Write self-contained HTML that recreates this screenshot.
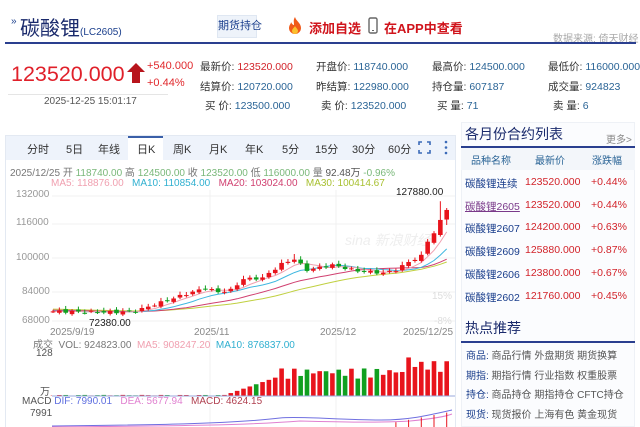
<!DOCTYPE html>
<html><head><meta charset="utf-8">
<style>
*{margin:0;padding:0;box-sizing:border-box}
body{width:640px;height:427px;overflow:hidden;background:#fff;font-family:"Liberation Sans","Noto Sans CJK SC",sans-serif;position:relative;color:#333}
.a{position:absolute;white-space:nowrap}
.lab{font-size:10.5px;color:#333}
.blue{color:#2a6496}
.red{color:#e0282c}
.tab{position:absolute;top:141px;font-size:11px;color:#333}
</style></head><body>
<div class="a" style="left:11px;top:16px;font-size:10px;color:#1a3e8c">»</div>
<div class="a" style="left:20px;top:12px;font-size:20px;color:#1a2a6c">碳酸锂<span style="font-size:10px;color:#1a3e8c">(LC2605)</span></div>
<div class="a" style="left:217px;top:15px;width:40px;height:23px;border:1px solid #dfe7f2;background:#eef3fa;font-size:11px;color:#1a3e8c;text-align:center;line-height:21px">期货持仓</div>
<svg class="a" style="left:287px;top:17px" width="16" height="18" viewBox="0 0 16 18"><path d="M8 0C9 4 14 6 14 11a6 6 0 0 1-12 0c0-3 2-4 2-6 1 2 2 3 3 3C7 5 6 3 8 0z" fill="#f05a1a"/><path d="M8 9c1 2 3 3 3 5a3 3 0 0 1-6 0c0-2 2-3 3-5z" fill="#fbc02d"/></svg>
<div class="a" style="left:309px;top:18px;font-size:13px;color:#d0141c;font-weight:bold">添加自选</div>
<svg class="a" style="left:368px;top:17px" width="10" height="17"><rect x="1" y="1" width="8" height="15" rx="1.5" fill="none" stroke="#666" stroke-width="1.4"/><line x1="4" y1="13.5" x2="6" y2="13.5" stroke="#666"/></svg>
<div class="a" style="left:384px;top:18px;font-size:13px;color:#d0141c;font-weight:bold">在APP中查看</div>
<div class="a" style="left:553px;top:30px;font-size:10px;color:#aaa">数据来源: 倚天财经</div>
<div class="a" style="left:5px;top:42px;width:631px;height:2px;background:#2a3f8f"></div>

<div class="a" style="left:11px;top:62px;font-size:21.5px;color:#e0202a">123520.000</div>
<svg class="a" style="left:127px;top:63px" width="18" height="20"><path d="M9 0L18 9H13V20H5V9H0z" fill="#b8141c"/></svg>
<div class="a red" style="left:147px;top:60px;font-size:11px">+540.000</div>
<div class="a red" style="left:147px;top:77px;font-size:11px">+0.44%</div>
<div class="a" style="left:8px;top:94px;width:160px;height:1px;background:#e5e5e5"></div>
<div class="a" style="left:44px;top:96px;font-size:10px;color:#555">2025-12-25 15:01:17</div>

<div class="a lab" style="left:200px;top:59px">最新价: <span class="red" style="color:#d2232a">123520.000</span></div>
<div class="a lab" style="left:316px;top:59px">开盘价: <span class="blue">118740.000</span></div>
<div class="a lab" style="left:432px;top:59px">最高价: <span class="blue">124500.000</span></div>
<div class="a lab" style="left:548px;top:59px">最低价: <span class="blue">116000.000</span></div>
<div class="a lab" style="left:200px;top:79px">结算价: <span class="blue">120720.000</span></div>
<div class="a lab" style="left:316px;top:79px">昨结算: <span class="blue">122980.000</span></div>
<div class="a lab" style="left:432px;top:79px">持仓量: <span class="blue">607187</span></div>
<div class="a lab" style="left:548px;top:79px">成交量: <span class="blue">924823</span></div>
<div class="a lab" style="left:205px;top:98px">买 价: <span class="blue">123500.000</span></div>
<div class="a lab" style="left:321px;top:98px">卖 价: <span class="blue">123520.000</span></div>
<div class="a lab" style="left:437px;top:98px">买 量: <span class="blue">71</span></div>
<div class="a lab" style="left:553px;top:98px">卖 量: <span class="blue">6</span></div>

<div class="a" style="left:5px;top:135px;width:451px;height:292px;border:1px solid #e3e9f2;border-bottom:none"></div>
<div class="a" style="left:6px;top:136px;width:449px;height:24px;background:#eef3fb"></div>
<div class="a" style="left:128px;top:136px;width:35px;height:24px;background:#fff;border-top:2px solid #3a5fa8"></div>
<div class="tab" style="left:27px">分时</div><div class="tab" style="left:66px">5日</div><div class="tab" style="left:98px">年线</div>
<div class="tab" style="left:137px">日K</div><div class="tab" style="left:173px">周K</div><div class="tab" style="left:209px">月K</div>
<div class="tab" style="left:245px">年K</div><div class="tab" style="left:282px">5分</div><div class="tab" style="left:315px">15分</div>
<div class="tab" style="left:352px">30分</div><div class="tab" style="left:388px">60分</div>
<svg class="a" style="left:418px;top:141px" width="13" height="13" fill="none" stroke="#3a6ab8" stroke-width="1.6"><path d="M1 4V1H4M9 1H12V4M12 9V12H9M4 12H1V9"/></svg>
<svg class="a" style="left:444px;top:140px" width="4" height="15"><circle cx="2" cy="2" r="1.3" fill="#3a6ab8"/><circle cx="2" cy="7.5" r="1.3" fill="#3a6ab8"/><circle cx="2" cy="13" r="1.3" fill="#3a6ab8"/></svg>

<div class="a" style="left:10px;top:164px;font-size:10px;color:#777">2025/12/25 <span>开</span> <span style="color:#7ab87a">118740.00</span> 高 <span style="color:#7ab87a">124500.00</span> 收 <span style="color:#7ab87a">123520.00</span> 低 <span style="color:#7ab87a">116000.00</span> 量 <span style="color:#555">92.48万</span> <span style="color:#7ab87a">-0.96%</span></div>
<div class="a" style="left:51px;top:178px;font-size:10px"><span style="color:#f0a0b0">MA5: 118876.00</span> &nbsp; <span style="color:#30b0d0">MA10: 110854.00</span> &nbsp; <span style="color:#d04070">MA20: 103024.00</span> &nbsp; <span style="color:#a8c030">MA30: 100414.67</span></div>

<svg class="a" style="left:0;top:0" width="460" height="427" id="ch"></svg>

<div class="a" style="left:16px;top:189px;font-size:10px;color:#999">132000</div>
<div class="a" style="left:16px;top:217px;font-size:10px;color:#999">116000</div>
<div class="a" style="left:16px;top:252px;font-size:10px;color:#999">100000</div>
<div class="a" style="left:22px;top:286px;font-size:10px;color:#999">84000</div>
<div class="a" style="left:22px;top:315px;font-size:10px;color:#999">68000</div>
<div class="a" style="left:396px;top:187px;font-size:10px;color:#222">127880.00</div>
<div class="a" style="left:89px;top:318px;font-size:10px;color:#222">72380.00</div>
<div class="a" style="left:432px;top:291px;font-size:10px;color:#ddd">15%</div>
<div class="a" style="left:434px;top:316px;font-size:10px;color:#ddd">-8%</div>
<div class="a" style="left:50px;top:327px;font-size:10px;color:#888">2025/9/19</div>
<div class="a" style="left:194px;top:327px;font-size:10px;color:#888">2025/11</div>
<div class="a" style="left:320px;top:327px;font-size:10px;color:#888">2025/12</div>
<div class="a" style="left:403px;top:327px;font-size:10px;color:#888">2025/12/25</div>
<div class="a" style="left:33px;top:336px;font-size:10px;color:#777">成交 &nbsp;VOL: 924823.00 &nbsp;<span style="color:#f0a0b0">MA5: 908247.20</span> &nbsp;<span style="color:#30b0d0">MA10: 876837.00</span></div>
<div class="a" style="left:36px;top:348px;font-size:10px;color:#555">128</div>
<div class="a" style="left:40px;top:383px;font-size:10px;color:#555">万</div>
<div class="a" style="left:22px;top:396px;font-size:10px;color:#555">MACD <span style="color:#6070e0">DIF: 7990.01</span> &nbsp; <span style="color:#e080d0">DEA: 5677.94</span> &nbsp; <span style="color:#b04050">MACD: 4624.15</span></div>
<div class="a" style="left:30px;top:408px;font-size:10px;color:#555">7991</div>

<div class="a" style="left:461px;top:122px;width:174px;height:305px;border:1px solid #eef1f6;background:#fbfcfe"></div>
<div class="a" style="left:465px;top:124px;font-size:14px;color:#1a2a6c">各月份合约列表</div>
<div class="a" style="left:606px;top:131px;font-size:10px;color:#888">更多&gt;</div>
<div class="a" style="left:461px;top:146px;width:174px;height:2px;background:#2a3f8f"></div>
<div class="a" style="left:461px;top:148px;width:174px;height:22px;background:#f3f6fa"></div>
<div id="rt"></div>
<div class="a" style="left:465px;top:318px;font-size:14px;color:#1a2a6c">热点推荐</div>
<div class="a" style="left:461px;top:341px;width:174px;height:2px;background:#2a3f8f"></div>
<div class="a" style="left:466px;top:347px;font-size:10px;color:#555;line-height:19.5px"><span style="color:#1a3e8c">商品:</span> 商品行情 外盘期货 期货换算<br><span style="color:#1a3e8c">期指:</span> 期指行情 行业指数 权重股票<br><span style="color:#1a3e8c">持仓:</span> 商品持仓 期指持仓 CFTC持仓<br><span style="color:#1a3e8c">现货:</span> 现货报价 上海有色 黄金现货</div>

<script>
var rt=document.getElementById('rt'),h='';
h+='<div class="a" style="left:471px;top:152px;font-size:10px;color:#2a6496">品种名称</div><div class="a" style="left:535px;top:152px;font-size:10px;color:#2a6496">最新价</div><div class="a" style="left:592px;top:152px;font-size:10px;color:#2a6496">涨跌幅</div>';
var rows=[['碳酸锂连续','123520.000','+0.44%'],['碳酸锂2605','123520.000','+0.44%'],['碳酸锂2607','124200.000','+0.63%'],['碳酸锂2609','125880.000','+0.87%'],['碳酸锂2606','123800.000','+0.67%'],['碳酸锂2602','121760.000','+0.45%']];
rows.forEach(function(r,i){var y=176+i*22.7;
h+='<div class="a" style="left:465px;top:'+y+'px;font-size:10.5px;color:'+(i==1?'#7a3a8a;text-decoration:underline':'#1a3e8c')+'">'+r[0]+'</div><div class="a" style="left:525px;top:'+y+'px;font-size:10.5px;color:#d2232a">'+r[1]+'</div><div class="a" style="left:591px;top:'+y+'px;font-size:10.5px;color:#d2232a">'+r[2]+'</div>';});
rt.innerHTML=h;
var kp=[[0,72800],[10,72400],[13,73000],[20,80500],[24,84500],[26,82500],[28,83500],[30,89000],[33,89500],[36,96500],[38,99000],[40,93500],[44,96000],[48,93000],[52,92000],[54,93500],[56,97500],[58,100500],[59,108000],[60,112000],[61,118000],[62,123500]];
var N=63,c=[];
for(var i=0;i<N;i++){for(var k=0;k<kp.length-1;k++){if(i>=kp[k][0]&&i<=kp[k+1][0]){var t=(i-kp[k][0])/(kp[k+1][0]-kp[k][0]);c[i]=kp[k][1]+t*(kp[k+1][1]-kp[k][1])+Math.sin(i*2.3)*600;break;}}}
c[62]=123520;
function Y(p){return 193+(132000-p)/64000*128;}
function X(i){return 53+i*6.35;}
var s='';
[196,224,258,292,321].forEach(function(y){s+='<line x1="52" x2="455" y1="'+y+'" y2="'+y+'" stroke="#f2f2f2"/>';});
[210,336].forEach(function(x){s+='<line x1="'+x+'" x2="'+x+'" y1="190" y2="427" stroke="#f0f0f0"/>';});
s+='<text x="345" y="245" font-size="14" fill="#eee" font-style="italic" font-family="Liberation Sans">sina 新浪财经</text>';
var hist=[];for(i=0;i<30;i++)hist.push(75500-i*100);
var all=hist.concat(c);
function ma(n,col){var p='';for(var i=0;i<N;i++){var sm=0;for(var j=0;j<n;j++)sm+=all[30+i-j];p+=(i?'L':'M')+X(i).toFixed(1)+' '+Y(sm/n).toFixed(1);}s+='<path d="'+p+'" fill="none" stroke="'+col+'" stroke-width="1"/>';}
ma(30,'#c0d040');ma(20,'#d04070');ma(10,'#40b8e0');ma(5,'#f0a0b0');
for(i=0;i<N;i++){var o=i?c[i-1]+Math.cos(i*3.1)*700:c[0];if(i==62)o=118740;if(i==61)o=111000;var up=c[i]>=o,col=up?'#e8141c':'#10a020';
var hi=Math.max(o,c[i])+800+Math.abs(Math.sin(i))*900,lo=Math.min(o,c[i])-800;if(i==61)hi=127880;if(i==62){hi=124500;lo=116000;}if(i==38)hi=101500;
var x=X(i);s+='<line x1="'+x+'" x2="'+x+'" y1="'+Y(hi)+'" y2="'+Y(lo)+'" stroke="'+col+'"/>';
var t=Y(Math.max(o,c[i])),b=Y(Math.min(o,c[i]));if(b-t<1)b=t+1;s+='<rect x="'+(x-2.3)+'" y="'+t+'" width="4.6" height="'+(b-t)+'" fill="'+col+'"/>';
var v=i<28?1+Math.abs(Math.sin(i))*2:(i<36?8+(i-28)*6:45+Math.abs(Math.sin(i*1.7))*30+(i>55?20:0));if(i==56)v=105;
var vh=v/128*47;s+='<rect x="'+(x-2.3)+'" y="'+(396-vh)+'" width="4.6" height="'+vh+'" fill="'+col+'"/>';}
s+='<line x1="52" x2="455" y1="396" y2="396" stroke="#9ad"/>';
s+='<path d="M52 426 C150 425 230 424 280 418 C300 416 340 420 380 420 C410 420 430 415 452 410" fill="none" stroke="#7070e0"/>';
s+='<path d="M52 427 C180 426 250 425 300 421 C340 422 380 423 410 421 C430 419 445 417 452 414" fill="none" stroke="#e080d0"/>';
for(i=54;i<63;i+=2){s+='<line x1="'+X(i)+'" x2="'+X(i)+'" y1="'+(427-(i-50)*1.2)+'" y2="427" stroke="#e8141c"/>';}
document.getElementById('ch').innerHTML=s;
</script>
</body></html>
